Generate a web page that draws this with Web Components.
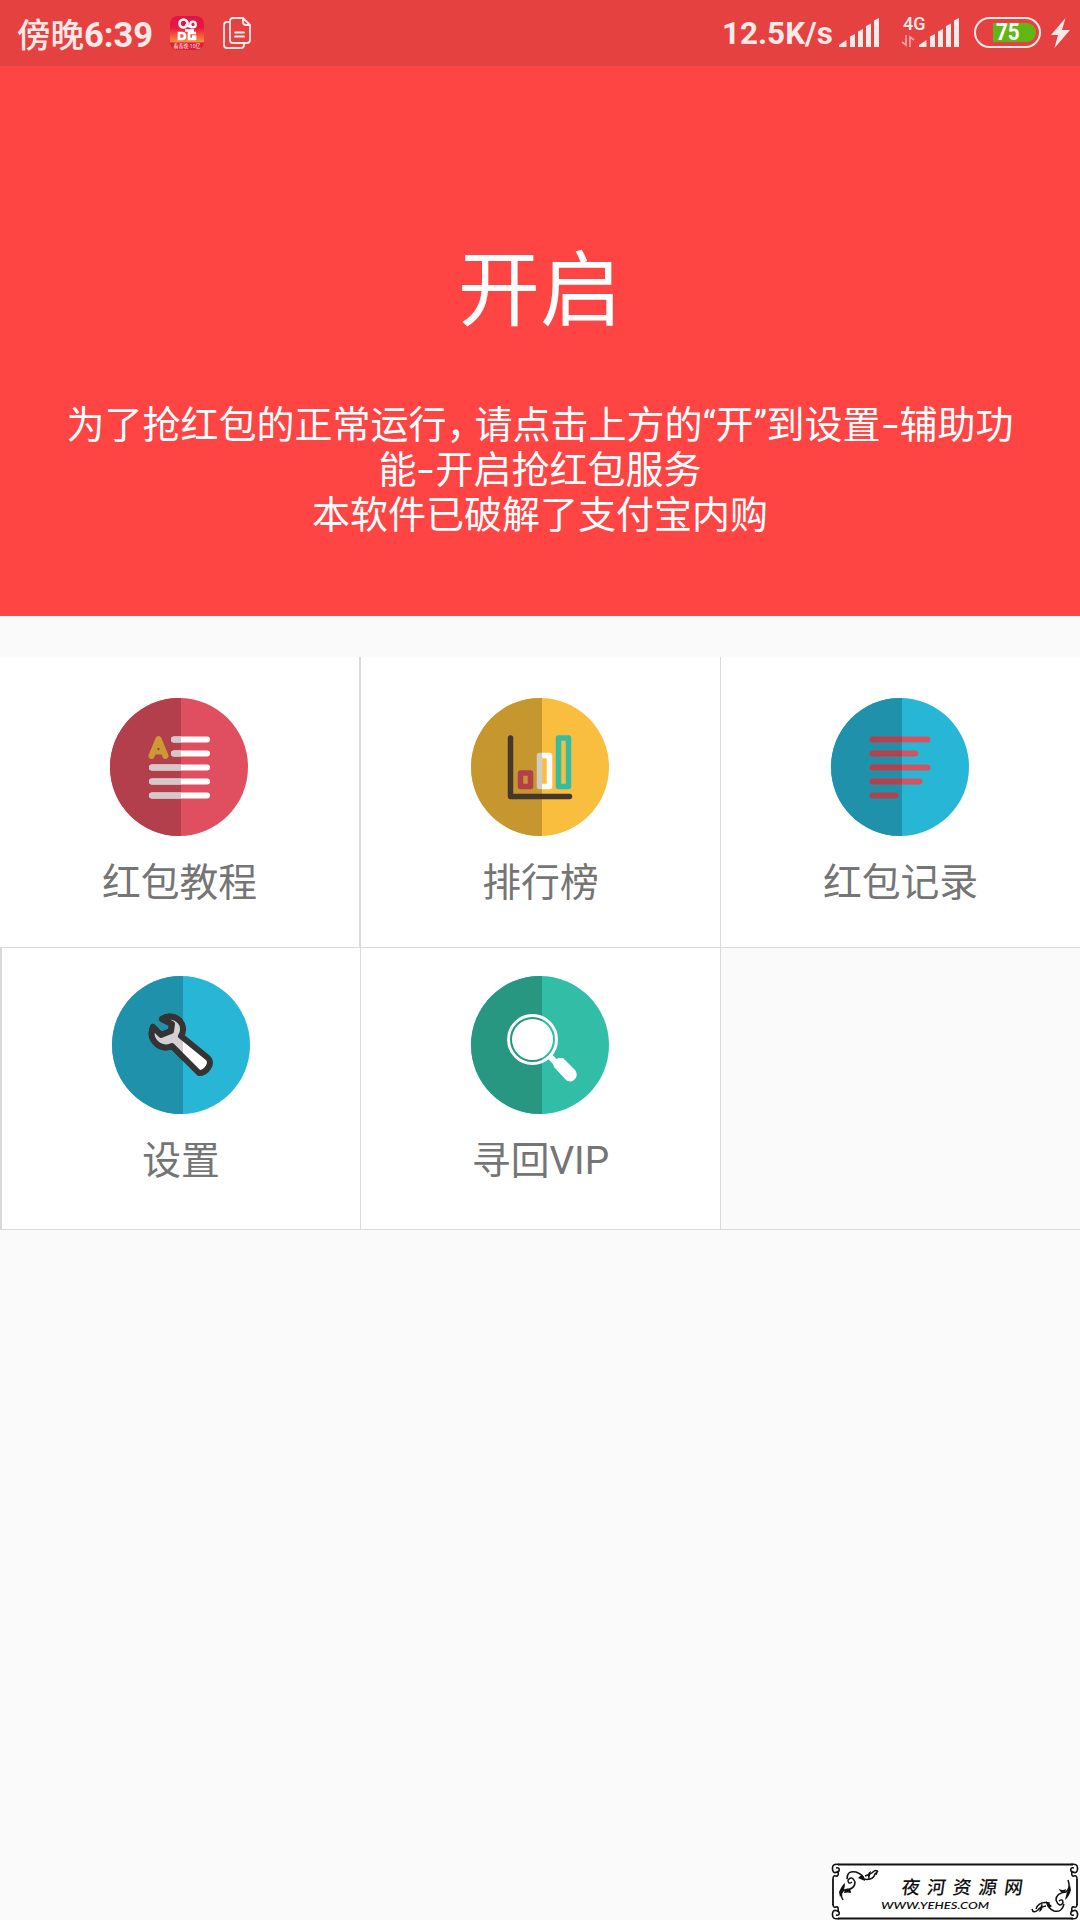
<!DOCTYPE html>
<html lang="zh-CN">
<head>
<meta charset="utf-8">
<title>抢红包</title>
<style>
html,body{margin:0;height:100%;background:#fafafa}
body{font-family:Roboto,"Noto Sans CJK SC",sans-serif}
</style>
</head>
<body>
<red-packet-app></red-packet-app>
<script>
const define = (name, html) => {
  const t = document.createElement('template');
  t.innerHTML = html;
  customElements.define(name, class extends HTMLElement {
    constructor() {
      super();
      this.attachShadow({ mode: 'open' }).append(t.content.cloneNode(true));
    }
  });
};

define('signal-bars', `<style>:host{display:block;width:40px;height:29px}svg{display:block}</style>
<svg width="40" height="29" viewBox="0 0 40 29" fill="#ffe9e7"><path d="M0 29V27L7.500 22V29ZM11 18.500L16 16V29H11ZM19 13.500L24 11V29H19ZM27 8L32 5.500V29H27ZM35 2.500L40 0V29H35Z"/></svg>`);

define('battery-level', `<style>
:host{display:flex;box-sizing:border-box;width:67px;height:31px;border:2.500px solid #ffe9e7;border-radius:16px;padding:3px;justify-content:flex-end}
div{width:43px;height:19px;background:#62b515;border-radius:0 9px 9px 0;margin-top:.5px;display:flex;align-items:center;color:#fff;font:bold 24px/19px Roboto,sans-serif}
span{margin-left:3px;transform:scaleX(.86);transform-origin:0 50%}
</style><div><span><slot></slot></span></div>`);

define('status-bar', `<style>
:host{display:flex;height:66px;box-sizing:border-box;background:#e44140;color:#ffe9e7;padding:0 10px 0 17px;align-items:flex-start;font-family:Roboto,"Noto Sans CJK SC",sans-serif}
svg{display:block}
.time{font-weight:700;font-size:34.500px;line-height:66px;width:153px;white-space:nowrap}
.time b{font:500 33.500px/66px "Noto Sans CJK SC",sans-serif}
.app{margin-top:16px}
.doc{margin:17px 0 0 19px}
.gap{flex:1}
.rate{font-weight:700;font-size:31.400px;line-height:68px;width:117px;white-space:nowrap}
signal-bars{margin-top:18px}
.net{width:39px;margin-left:23px;height:66px;position:relative;font-size:18px;font-weight:500;line-height:20px}
.net span{display:block;margin:14px 0 0 1px}
.net svg{position:absolute;left:-1px;top:35px}
battery-level{margin:17px 10px 0 15px}
.bolt{margin-top:18px}
</style>
<div class="time"><b>傍晚</b>6:39</div>
<svg class="app" width="34" height="34" viewBox="0 0 34 34" overflow="visible"><defs><linearGradient id="g" x2="0" y2="1"><stop stop-color="#df124b"/><stop offset=".35" stop-color="#ec173c"/><stop offset=".75" stop-color="#fb8c3c"/><stop offset=".8" stop-color="#dc1d3e"/></linearGradient></defs>
<rect width="34" height="34" rx="8" fill="url(#g)"/><g fill="none" stroke="#fff"><circle cx="13.500" cy="7.500" r="4" stroke-width="2.700"/><circle cx="23" cy="8.500" r="2.800" stroke-width="2.300"/><path d="M15 9L22 11.500" stroke-width="2"/><path d="M9 17V23H12Q15 23 15 20T12 17ZM26 17H19V23H25V20.500H22M15 14.500H24" stroke-width="2.700"/></g><text x="17" y="31.500" text-anchor="middle" fill="#ffe9d8" font-size="5.500" textLength="27" lengthAdjust="spacingAndGlyphs">看春晚·10亿</text></svg>
<svg class="doc" width="29" height="33" viewBox="0 0 29 33" fill="none" stroke="#ffe9e7" stroke-width="1.800" stroke-linejoin="round" stroke-linecap="round"><path d="M10 1H20L27 8V23Q27 26 24 26H10Q7 26 7 23V4Q7 1 10 1ZM20 1V5Q20 8 23 8H27M7 5H4Q1 5 1 8V28Q1 31 4 31H18Q21 31 21 28V26M12 15.500H21M12 19.500H21"/></svg>
<div class="gap"></div>
<div class="rate">12.5K/s</div><signal-bars></signal-bars>
<div class="net"><span>4G</span><svg width="14" height="12" viewBox="0 0 14 12" fill="none" stroke="#ffe9e7" stroke-opacity=".6" stroke-width="1.700"><path d="M5 0V10L1 7M9 12V2L13 5"/></svg></div>
<signal-bars style="margin-left:-22px"></signal-bars>
<battery-level>75</battery-level>
<svg class="bolt" width="19" height="30" viewBox="0 0 19 30" fill="#ffe9e7"><path d="M14.500 0L0 17H7L3.500 30L19 12H11Z"/></svg>`);

define('hero-panel', `<style>
:host{display:flex;flex-direction:column;align-items:center;box-sizing:border-box;height:550px;background:#ff4444;color:#fff;padding-top:158px;font-family:Roboto,"Noto Sans CJK SC",sans-serif}
h1{margin:0;font:400 82px/120px "Noto Sans CJK SC",sans-serif}
section{margin-top:59px;font-size:38px;font-weight:400}
p{margin:0;height:45px;line-height:45px;display:flex;justify-content:center;white-space:pre}
i{font-style:normal;text-align:center}
.d{width:19px;transform:scaleX(1.500)}
.q{width:13px}
.c{width:28px}
</style>
<h1>开启</h1>
<section>
<p>为了抢红包的正常运行<i class="c">，</i>请点击上方的<i class="q">“</i>开<i class="q">”</i>到设置<i class="d">-</i>辅助功</p>
<p>能<i class="d">-</i>开启抢红包服务</p>
<p>本软件已破解了支付宝内购</p>
</section>`);

define('menu-tile', `<style>
:host{display:flex;flex-direction:column;align-items:center;box-sizing:border-box;background:#fff;color:#757575;font:400 38.800px/58px Roboto,"Noto Sans CJK SC",sans-serif}
::slotted(svg){display:block;width:138px;height:138px}
.label{margin-top:17.500px;white-space:nowrap}
</style><slot name="icon"></slot><div class="label"><slot></slot></div>`);

define('menu-grid', `<style>
:host{display:grid;grid-template-columns:361px 360px 359px;grid-template-rows:291px 282px;margin-top:41px}
menu-tile,.blank{border-right:1px solid #dadada;border-bottom:1px solid #dadada}
.r1{padding-top:41px}
.r2{padding-top:28px}
.nudge{margin-right:2px}
.first{border-right-width:2px}
.set{border-left:2px solid #dadada}
.end{border-right:0}
.blank{border-right:0}
</style>
<menu-tile class="r1 first"><svg slot="icon" class="nudge" viewBox="0 0 138 138"><circle cx="69" cy="69" r="69" fill="#e04f5f"/><path d="M71 0H69A69 69 0 0 0 69 138H71Z" fill="#b33f4c"/>
<g stroke="#fff" stroke-width="6" stroke-linecap="round"><path d="M64 41.500H97M64 55.500H97M42 69.500H97M42 83.500H97M42 97.500H97"/></g><path d="M64 38.500A3 3 0 0 0 64 44.500H71V38.500ZM64 52.500A3 3 0 0 0 64 58.500H71V52.500ZM42 66.500A3 3 0 0 0 42 72.500H71V66.500ZM42 80.500A3 3 0 0 0 42 86.500H71V80.500ZM42 94.500A3 3 0 0 0 42 100.500H71V94.500Z" fill="#d4c8cb"/><path d="M41.500 58L48.500 41L55.500 58M45 53.500H52" fill="none" stroke="#cc9934" stroke-width="6" stroke-linecap="round" stroke-linejoin="round"/><path d="M48.500 46L45.500 54H51.500Z" fill="#cc9934"/><circle cx="48.500" cy="51" r="1.200" fill="#944b35"/></svg>红包教程</menu-tile>
<menu-tile class="r1"><svg slot="icon" class="nudge" viewBox="0 0 138 138"><circle cx="69" cy="69" r="69" fill="#fabe3e"/><path d="M71 0H69A69 69 0 0 0 69 138H71Z" fill="#c7972f"/>
<path d="M39.500 40V98.500H98.500" fill="none" stroke="#44372c" stroke-width="5.500" stroke-linecap="round" stroke-linejoin="round"/><rect x="49.500" y="75" width="10" height="13.500" fill="none" stroke="#b33f4c" stroke-width="5.500" stroke-linejoin="round"/><path d="M71 57.500H78.500V88.500H71" fill="none" stroke="#fff" stroke-width="5.500" stroke-linejoin="round"/><path d="M71 57.500H68.500V88.500H71" fill="none" stroke="#d2cbc2" stroke-width="5.500" stroke-linejoin="round"/><rect x="87.500" y="40" width="10" height="48.500" fill="none" stroke="#35bda4" stroke-width="5.500" stroke-linejoin="round"/></svg>排行榜</menu-tile>
<menu-tile class="r1 end"><svg slot="icon" class="nudge" viewBox="0 0 138 138"><circle cx="69" cy="69" r="69" fill="#27b6d5"/><path d="M71 0H69A69 69 0 0 0 69 138H71Z" fill="#1f91ab"/>
<path d="M41.500 41.500H96.500M41.500 55.500H84.500M41.500 69.500H96.500M41.500 83.500H88.500" stroke="#d35461" stroke-width="6" stroke-linecap="round"/><path d="M71 41.500H41.500M71 55.500H41.500M71 69.500H41.500M71 83.500H41.500" stroke="#ad4451" stroke-width="6"/><path d="M41.500 41.500h1M41.500 55.500h1M41.500 69.500h1M41.500 83.500h1M41.500 97.500H64.500" stroke="#ad4451" stroke-width="6" stroke-linecap="round"/></svg>红包记录</menu-tile>
<menu-tile class="r2 set"><svg slot="icon" viewBox="0 0 138 138"><defs><clipPath id="left"><path d="M0 0H71V138H0Z"/></clipPath></defs><circle cx="69" cy="69" r="69" fill="#27b6d5"/><path d="M71 0H69A69 69 0 0 0 69 138H71Z" fill="#1f91ab"/>
<path d="M50 43C57 38 66 41 70 48C72 53 71 57 69 60L96 82C101 87 95 97 87 97L60 70C51 74 43 69 40 61Q39 55 41 51L49 59L59 55L60 48Z" fill="#fff" stroke="#353333" stroke-width="6" stroke-linejoin="round"/><path d="M50 43C57 38 66 41 70 48C72 53 71 57 69 60L96 82C101 87 95 97 87 97L60 70C51 74 43 69 40 61Q39 55 41 51L49 59L59 55L60 48Z" fill="#d2d0d0" stroke="#353333" stroke-width="6" stroke-linejoin="round" clip-path="url(#left)"/></svg>设置</menu-tile>
<menu-tile class="r2"><svg slot="icon" class="nudge" viewBox="0 0 138 138"><circle cx="69" cy="69" r="69" fill="#32bea6"/><path d="M71 0H69A69 69 0 0 0 69 138H71Z" fill="#289782"/>
<circle cx="61.500" cy="63.500" r="24" fill="none" stroke="#fff" stroke-width="3"/><circle cx="61.500" cy="63.500" r="20.500" fill="#fff"/><path d="M78.500 80L86 88" stroke="#fff" stroke-width="6"/><path d="M87 82L92 82L104 94C109 100 102 109 95 104L83 91L82 87Z" fill="#fff"/></svg>寻回VIP</menu-tile>
<div class="blank"></div>`);

define('site-watermark', `<style>
:host{position:absolute;left:831px;top:1863px;width:249px;height:57px;display:block;color:#111}
svg{display:block}
</style>
<svg width="249" height="57" viewBox="0 0 249 57" fill="none" stroke="#111">
<path d="M8 1.500H242L247 4V9L243 14L245 16V42L242 45L247 50V53L242 55H7L2 52V47L6 43L2 41V15L6 13L2 8V4Z" fill="#fff" stroke="none"/>
<path d="M7 1.500H242M7 55.500H242M2 16V42M246 16V42" stroke-width="1.800"/>
<path id="c" d="M8 1.500Q1 0 1.500 6T8 8Q9 4 5 5M2 16Q2 12 5 13T7 8" stroke-width="1.600"/>
<use href="#c" transform="matrix(-1 0 0 1 248 0)"/><use href="#c" transform="matrix(1 0 0 -1 0 57)"/><use href="#c" transform="matrix(-1 0 0 -1 248 57)"/>
<g id="v"><path d="M12 37Q8 30 13 27Q24 27 24 19Q21 12 17 17Q17 22 21 19M16 16Q16 7 25 9Q33 12 32 16Q42 18 44 11M34 13Q40 11 42 9Q45 6 47 9" stroke-width="1.500"/><path d="M8 29Q11 22 14 20Q14 27 9 34ZM14 26Q20 24 20 30Q17 29 13 30ZM27 15Q33 9 34 18ZM38 17Q35 10 40 8ZM43 11L47 7L46 12Z" fill="#111" stroke="none"/></g>
<path d="M237 17Q240 25 235 29Q225 30 225 37Q228 45 232 40Q232 35 228 38M233 41Q231 50 223 48Q216 45 218 40Q208 38 205 46M215 43Q209 44 207 47Q202 51 201 46" stroke-width="1.500"/><path d="M240 27Q238 34 234 37Q235 30 239 22ZM234 30Q229 30 228 26Q232 28 235 26ZM221 43Q216 48 215 38ZM211 39Q213 47 208 49Z" fill="#111" stroke="none"/>
<g fill="#111" stroke="none"><text x="69" y="31" transform="translate(5 0) skewX(-8)" font-family="Noto Sans CJK SC,sans-serif" font-size="18.500" font-weight="500" letter-spacing="7.200">夜河资源网</text><text x="50" y="45.500" font-family="Lato,sans-serif" font-style="italic" font-weight="600" font-size="10" textLength="108" lengthAdjust="spacingAndGlyphs">WWW.YEHES.COM</text></g>
</svg>`);

define('red-packet-app', `<style>:host{display:block;position:relative;width:1080px;height:1920px;background:#fafafa;overflow:hidden}</style>
<status-bar></status-bar><hero-panel></hero-panel><menu-grid></menu-grid><site-watermark></site-watermark>`);
</script>
</body>
</html>
